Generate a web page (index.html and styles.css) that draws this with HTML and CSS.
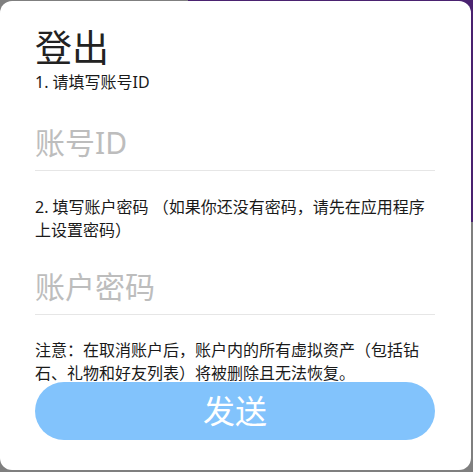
FILE: index.html
```html
<!DOCTYPE html>
<html lang="zh-CN">
<head>
<meta charset="utf-8">
<title>登出</title>
<link rel="stylesheet" href="styles.css">
</head>
<body>
<div class="backdrop-accent"></div>
<div class="card">
  <h1 class="title">登出</h1>
  <p class="label label-first">1. 请填写账号ID</p>
  <div class="field field-first"><span class="placeholder">账号ID</span></div>
  <p class="label label-second">2. 填写账户密码 （如果你还没有密码，请先在应用程序上设置密码）</p>
  <div class="field field-second"><span class="placeholder">账户密码</span></div>
  <p class="note">注意：在取消账户后，账户内的所有虚拟资产（包括钻石、礼物和好友列表）将被删除且无法恢复。</p>
  <button class="send" type="button">发送</button>
</div>
</body>
</html>
```
FILE: styles.css
```css
html, body {
  margin: 0;
  padding: 0;
}
body {
  width: 473px;
  height: 472px;
  overflow: hidden;
  background: #7f7f7f;
  position: relative;
  font-family: "Noto Sans", "Noto Sans CJK SC", sans-serif;
}
.backdrop-accent {
  position: absolute;
  left: 188px;
  top: 0;
  width: 285px;
  height: 222px;
  background: #4a2270;
}
.card {
  position: relative;
  margin-top: 1px;
  width: 471px;
  height: 469px;
  box-sizing: border-box;
  padding: 0 36px 0 35px;
  background: #ffffff;
  border-radius: 12px;
  display: flex;
  flex-direction: column;
}
.title {
  margin: 27px 0 0;
  font-size: 37px;
  line-height: 40px;
  font-weight: 400;
  color: #222222;
}
.label, .note {
  margin: 0;
  font-size: 16px;
  line-height: 23px;
  color: #1a1a1a;
}
.label-first {
  margin-top: 3px;
  line-height: 22px;
}
.field {
  border-bottom: 1px solid #e6e6e6;
  padding-bottom: 9px;
  font-size: 30px;
  line-height: 36px;
}
.field-first {
  margin-top: 32px;
}
.field-second {
  margin-top: 27px;
}
.placeholder {
  color: #bdbdbd;
}
.label-second {
  margin-top: 25px;
}
.note {
  margin-top: 24px;
}
.send {
  margin-top: -3px;
  height: 58px;
  width: 100%;
  border: none;
  border-radius: 29px;
  background: #82c3fc;
  color: #ffffff;
  font-family: "Noto Sans", "Noto Sans CJK SC", sans-serif;
  font-size: 32px;
  line-height: 58px;
  padding: 0;
}
```
